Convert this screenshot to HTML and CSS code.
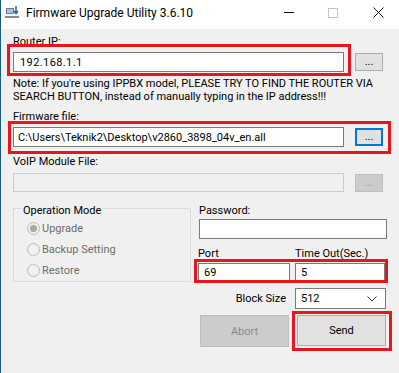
FILE: index.html
```html
<!DOCTYPE html>
<html lang="en">
<head>
    <meta charset="UTF-8">
    <title>Firmware Upgrade Utility 3.6.10</title>
    <link rel="stylesheet" href="styles.css">
</head>
<body>
    <div class="window">
        <!-- Title bar -->
        <div class="titlebar">
            <svg class="app-icon" width="14" height="14" viewBox="0 0 14 14">
                <rect x="1" y="3" width="8" height="6" fill="#5b7fa6"/>
                <rect x="2" y="4" width="6" height="4" fill="#a9c4e0"/>
                <rect x="0" y="11" width="14" height="2" fill="#8a8a8a"/>
                <path d="M11 1 v7 M9 6 l2 2.5 l2 -2.5" stroke="#3a5f8a" stroke-width="1.5" fill="none"/>
            </svg>
            <span class="title">Firmware Upgrade Utility 3.6.10</span>
            <div class="caption-buttons">
                <span class="cap-min"></span>
                <span class="cap-max"></span>
                <svg class="cap-close" width="11" height="11" viewBox="0 0 11 11">
                    <path d="M0.5 0.5 L10.5 10.5 M10.5 0.5 L0.5 10.5" stroke="#111" stroke-width="1"/>
                </svg>
            </div>
        </div>

        <div class="client">
            <!-- Router IP -->
            <div class="label label-ip">Router IP:</div>
            <div class="file-row row-ip">
                <div class="marked">
                    <input class="text-box" type="text" value="192.168.1.1">
                    <div class="mark mark-ip"></div>
                </div>
                <button class="dots">...</button>
            </div>
            <div class="note">
                Note: If you're using IPPBX model, PLEASE TRY TO FIND THE ROUTER VIA<br>
                SEARCH BUTTON, instead of manually typing in the IP address!!!
            </div>

            <!-- Firmware file -->
            <div class="label label-fw">Firmware file:</div>
            <div class="file-row row-fw marked">
                <input class="text-box" type="text" value="C:\Users\Teknik2\Desktop\v2860_3898_04v_en.all">
                <button class="dots dots-focus">...</button>
                <div class="mark mark-fw"></div>
            </div>

            <!-- VoIP module file -->
            <div class="label label-voip">VoIP Module File:</div>
            <div class="file-row row-voip">
                <input class="text-box text-disabled" type="text" disabled>
                <button class="dots dots-disabled" disabled>...</button>
            </div>

            <div class="lower">
                <fieldset class="group">
                    <legend>Operation Mode</legend>
                    <div class="radios">
                        <div class="radio"><span class="dot checked"></span>Upgrade</div>
                        <div class="radio"><span class="dot"></span>Backup Setting</div>
                        <div class="radio"><span class="dot"></span>Restore</div>
                    </div>
                </fieldset>

                <div class="settings">
                    <div class="label label-pass">Password:</div>
                    <input class="text-box pass-box" type="password">

                    <div class="pair pair-labels">
                        <span class="port-label">Port</span>
                        <span>Time Out(Sec.)</span>
                    </div>
                    <div class="pair pair-inputs marked">
                        <input class="text-box port-box" type="text" value="69">
                        <input class="text-box timeout-box" type="text" value="5">
                        <div class="mark mark-port"></div>
                    </div>

                    <div class="block-row">
                        <span>Block Size</span>
                        <div class="select">
                            <span>512</span>
                            <svg width="10" height="6" viewBox="0 0 10 6">
                                <path d="M0.5 0.5 L5 5 L9.5 0.5" stroke="#333" stroke-width="1" fill="none"/>
                            </svg>
                        </div>
                    </div>

                    <div class="actions">
                        <button class="btn btn-disabled" disabled>Abort</button>
                        <div class="marked">
                            <button class="btn btn-send">Send</button>
                            <div class="mark mark-send"></div>
                        </div>
                    </div>
                </div>
            </div>
        </div>
    </div>
</body>
</html>
```

FILE: styles.css
```css
* {
    margin: 0;
    padding: 0;
    box-sizing: border-box;
}

body {
    background: #f0f0f0;
    font-family: Roboto, "Noto Sans", sans-serif;
    font-size: 11px;
    color: #000;
    width: 399px;
    height: 373px;
    overflow: hidden;
}

.window {
    border-left: 1px solid #1c5b80;
    height: 373px;
}

/* Title bar */
.titlebar {
    height: 29px;
    background: #fff;
    display: flex;
    align-items: center;
    padding-left: 4px;
}

.app-icon {
    margin-top: -5px;
}

.title {
    margin-left: 7px;
    font-size: 12px;
    margin-top: -4px;
}

.caption-buttons {
    margin-left: auto;
    display: flex;
    align-items: center;
    margin-top: -4px;
}

.cap-min {
    width: 10px;
    height: 1px;
    background: #111;
}

.cap-max {
    width: 10px;
    height: 10px;
    border: 1px solid #c4c4c4;
    margin-left: 34px;
}

.cap-close {
    margin-left: 35px;
    margin-right: 15px;
}

/* Client area */
.client {
    padding-left: 12px;
}

.label {
    line-height: 15px;
    white-space: nowrap;
}

.label-ip { margin-top: 5px; }
.label-fw { margin-top: 6px; }
.label-voip { margin-top: 7px; }

.file-row {
    display: flex;
    align-items: center;
    gap: 11px;
    width: 370px;
}

.row-ip { margin-top: 3px; }
.row-fw { margin-top: 3px; }
.row-voip { margin-top: 4px; }

.text-box {
    width: 331px;
    height: 20px;
    border: 1px solid #7a7a7a;
    background: #fff;
    font-family: Roboto, "Noto Sans", sans-serif;
    font-size: 11px;
    color: #000;
    padding: 0 5px;
    outline: none;
}

.row-ip .text-box { padding-left: 6px; letter-spacing: 0.4px; }
.row-fw .text-box { padding-left: 4px; }

.text-disabled {
    height: 19px;
    background: #f0f0f0;
    border-color: #cccccc;
}

.dots {
    width: 28px;
    height: 18px;
    border: 1px solid #adadad;
    background: #e1e1e1;
    font-family: Roboto, "Noto Sans", sans-serif;
    font-size: 11px;
    line-height: 12px;
    color: #000;
}

.dots-focus {
    border: 2px solid #0078d7;
}

.dots-disabled {
    border-color: #bfbfbf;
    background: #cccccc;
    color: #9a9a9a;
}

.note {
    margin-top: 5px;
    line-height: 13px;
    white-space: nowrap;
}

/* Red annotation boxes drawn over the controls */
.marked {
    position: relative;
}

.mark {
    position: absolute;
    border: 3px solid #e8141e;
    pointer-events: none;
}

.mark-ip { left: -6px; right: -7px; top: -8px; bottom: -4px; }
.mark-fw { left: -5px; right: -8px; top: -6px; bottom: -7px; }
.mark-port { left: -4px; right: -4px; top: -4px; bottom: -1px; }
.mark-send { left: -5px; right: -6px; top: -4px; bottom: -4px; }

/* Lower section */
.lower {
    display: flex;
    gap: 7px;
}

.group {
    width: 178px;
    height: 83px;
    margin-top: 7px;
    border: 1px solid #dcdcdc;
    padding: 0 0 0 8px;
}

.group legend {
    padding: 4px 1px 0;
    line-height: 15px;
}

.radios {
    margin-left: 5px;
}

.radio {
    height: 21px;
    display: flex;
    align-items: center;
    color: #6d6d6d;
    white-space: nowrap;
}

.dot {
    width: 13px;
    height: 13px;
    border: 1px solid #bcbcbc;
    border-radius: 50%;
    background: #f0f0f0;
    margin-right: 2px;
    display: flex;
    align-items: center;
    justify-content: center;
}

.dot.checked::after {
    content: "";
    width: 7px;
    height: 7px;
    border-radius: 50%;
    background: #a8a8a8;
}

.settings {
    width: 188px;
}

.label-pass {
    margin-top: 11px;
    padding-left: 1px;
}

.pass-box {
    width: 188px;
    margin-top: 1px;
    margin-left: 1px;
    display: block;
}

.pair {
    display: flex;
    width: 186px;
}

.pair-labels {
    margin-top: 7px;
    line-height: 15px;
}

.port-label {
    width: 97px;
}

.pair-inputs {
    margin-top: 2px;
    gap: 5px;
}

.port-box {
    width: 92px;
    height: 19px;
}

.timeout-box {
    width: 90px;
    height: 19px;
}

.block-row {
    margin-top: 6px;
    display: flex;
    justify-content: flex-end;
    align-items: center;
    gap: 9px;
    width: 188px;
}

.select {
    width: 91px;
    height: 21px;
    border: 1px solid #7a7a7a;
    background: #fff;
    display: flex;
    align-items: center;
    justify-content: space-between;
    padding: 0 8px 0 5px;
}

.actions {
    margin-top: 6px;
    display: flex;
    gap: 8px;
    padding-left: 2px;
}

.btn {
    width: 89px;
    height: 31px;
    font-family: Roboto, "Noto Sans", sans-serif;
    font-size: 11px;
}

.btn-disabled {
    height: 32px;
    background: #cccccc;
    border: 1px solid #bfbfbf;
    color: #8a8a8a;
}

.btn-send {
    background: #e1e1e1;
    border: 1px solid #adadad;
    color: #000;
}
```
